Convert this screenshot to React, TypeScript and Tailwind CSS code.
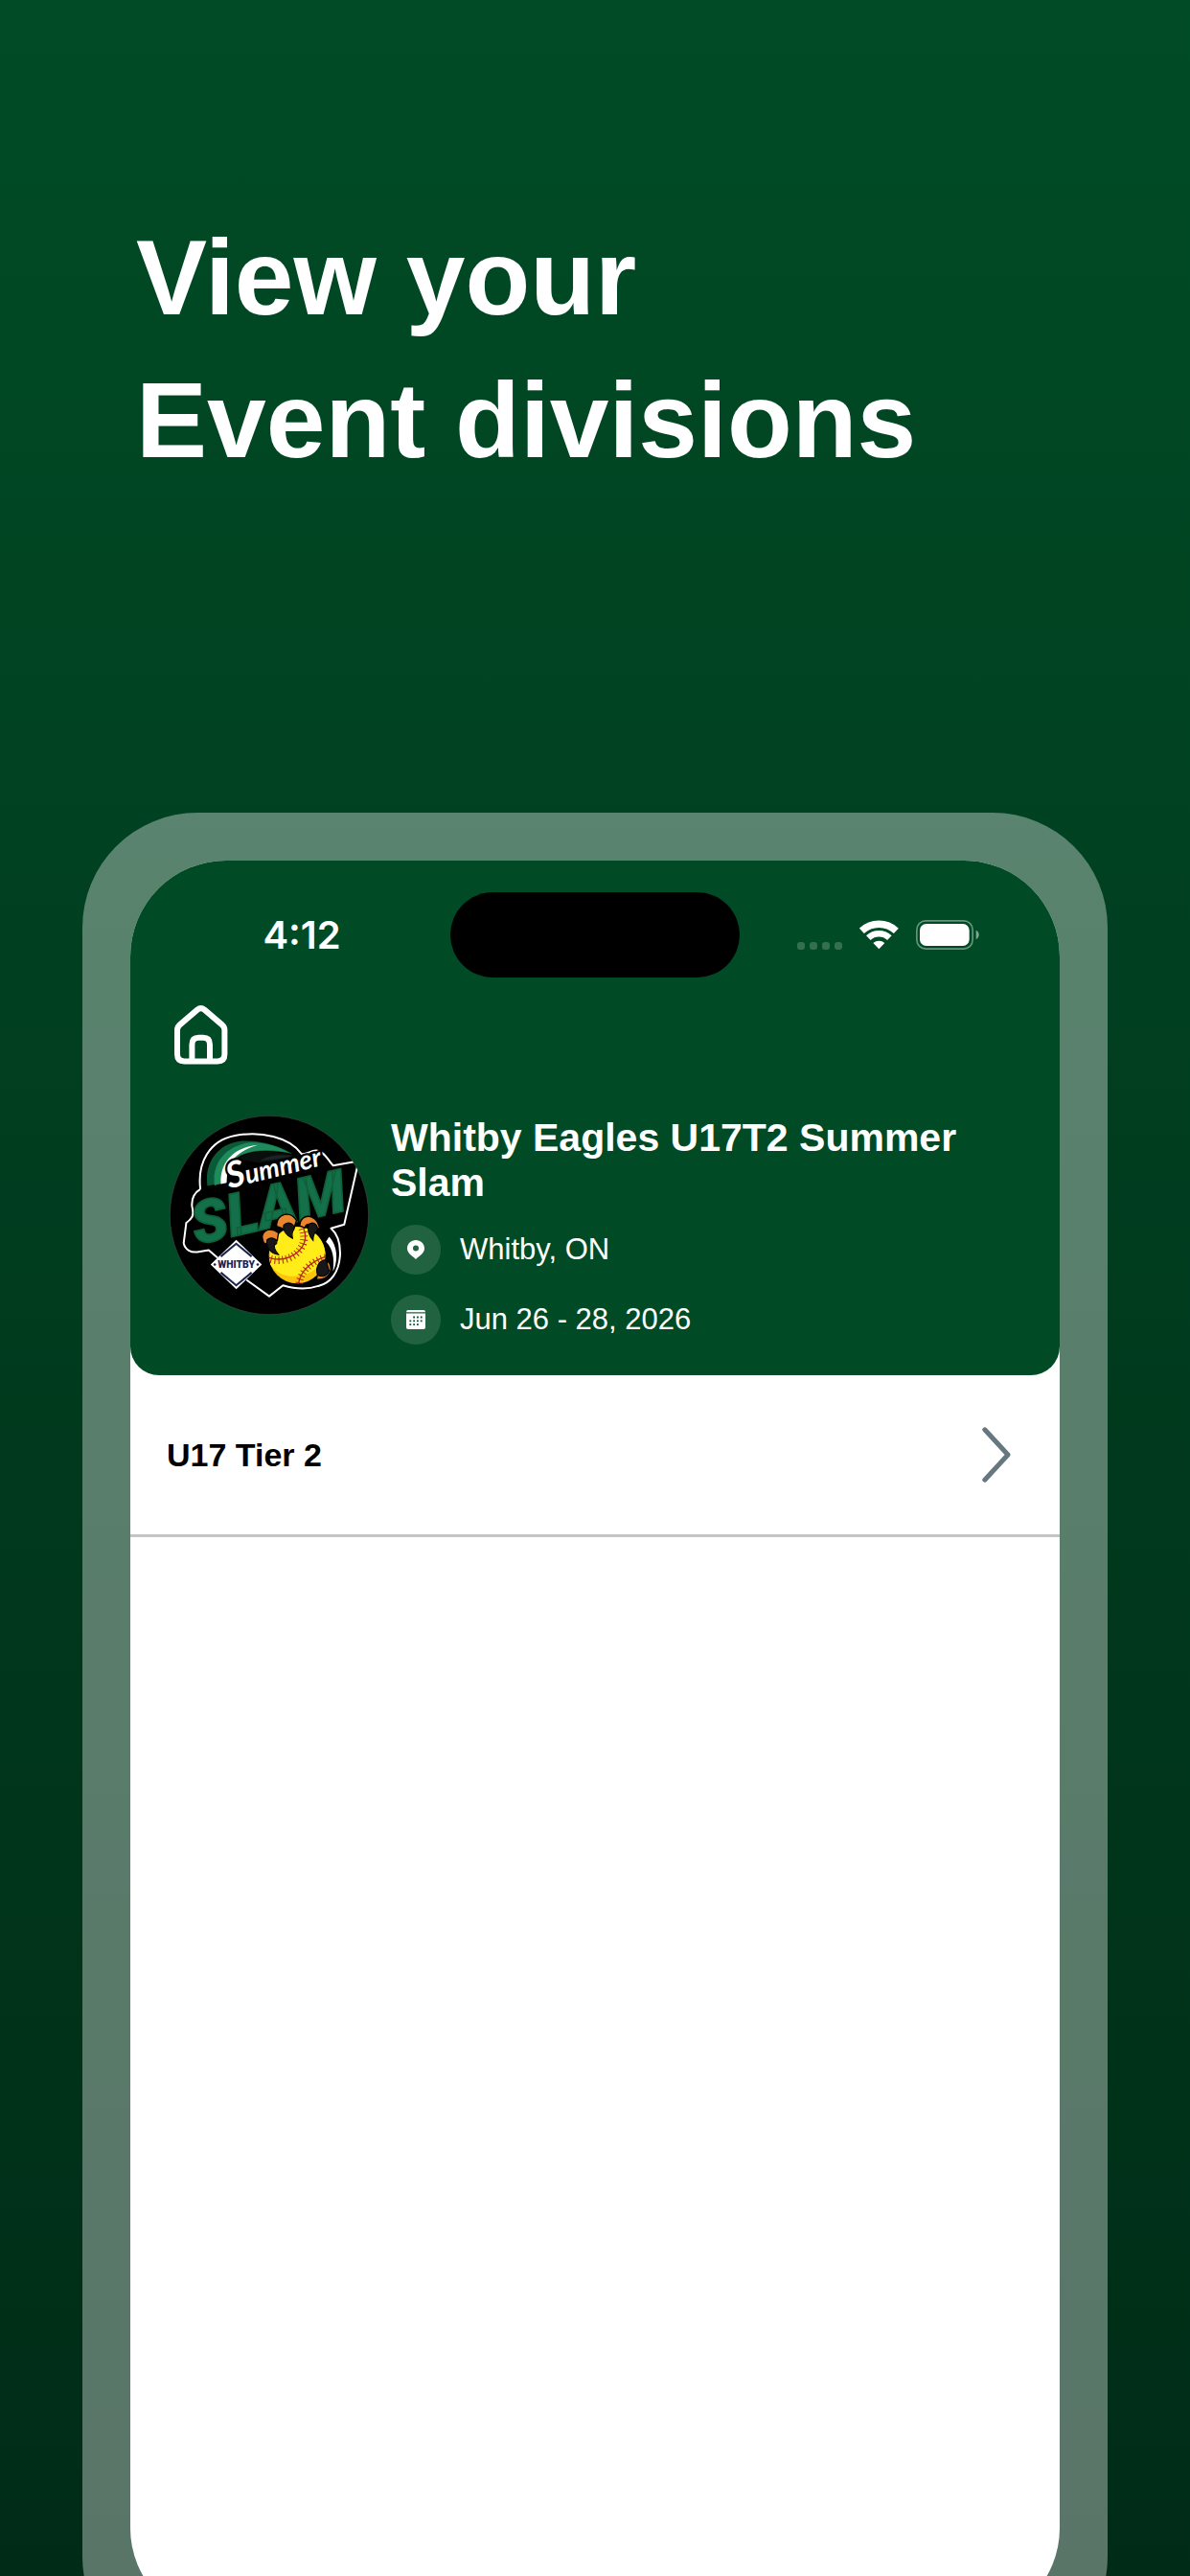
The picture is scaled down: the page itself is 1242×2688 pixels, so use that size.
import type { ReactNode } from "react";

const event = {
  name: "Whitby Eagles U17T2 Summer Slam",
  location: "Whitby, ON",
  dates: "Jun 26 - 28, 2026",
};

const divisions = [{ id: "u17-tier-2", label: "U17 Tier 2" }];

function HomeIcon() {
  return (
    <svg viewBox="0 0 56 62" className="h-[62px] w-14" fill="none" stroke="currentColor" strokeWidth="6" strokeLinejoin="round" aria-hidden="true">
      <path d="M24 4.6Q27.7 1.6 31.4 4.6L49.8 20.4Q52.4 22.6 52.4 26V51Q52.4 58.4 45 58.4H10.4Q3 58.4 3 51V26Q3 22.6 5.6 20.4Z" />
      <path d="M18.4 58V41Q18.4 33.8 25.4 33.8H30Q37 33.8 37 41V58" />
    </svg>
  );
}

function WifiIcon() {
  return (
    <svg viewBox="348 183 123 93" className="h-[31px] w-[41px]" fill="none" stroke="currentColor" aria-hidden="true">
      <path d="M355 217A79 79 0 0 1 463 217" strokeWidth="22" />
      <path d="M376 239A48 48 0 0 1 442 239" strokeWidth="20" />
      <path d="M391 255A27 27 0 0 1 427 255L409 274Z" fill="currentColor" stroke="none" />
    </svg>
  );
}

function BatteryIcon() {
  return (
    <svg viewBox="0 0 198 93" className="h-[31px] w-[66px]" fill="none" aria-hidden="true">
      <rect x="2.5" y="2.5" width="175" height="88" rx="28" stroke="white" strokeOpacity="0.4" strokeWidth="5" />
      <rect x="12" y="12" width="155" height="69" rx="20" fill="white" />
      <path d="M188 32Q197 36 197 46T188 61Z" fill="white" fillOpacity="0.5" />
    </svg>
  );
}

function PinIcon() {
  return (
    <svg viewBox="0 0 18 20" className="h-5 w-[18px]" aria-hidden="true">
      <path fillRule="evenodd" fill="currentColor" d="M9 0C4 0 0 3.8 0 8.6C0 13.6 4 15.5 9 20C14 15.5 18 13.6 18 8.6C18 3.8 14 0 9 0ZM9 5.6A3 3 0 1 1 9 11.6A3 3 0 1 1 9 5.6Z" />
    </svg>
  );
}

function CalendarIcon() {
  return (
    <svg viewBox="0 0 20 20" className="size-5" aria-hidden="true">
      <path d="M2 0H18Q20 0 20 2.2H0Q0 0 2 0Z" fill="currentColor" />
      <path d="M0 3.4H20V18Q20 20 18 20H2Q0 20 0 18Z" fill="currentColor" />
      <g fill="#0f5131">
        <path d="M7.2 6.6h1.8v1.8H7.2zM11 6.6h1.8v1.8H11zM14.8 6.6h1.8v1.8h-1.8z" />
        <path d="M3.4 10.4h1.8v1.8H3.4zM7.2 10.4h1.8v1.8H7.2zM11 10.4h1.8v1.8H11zM14.8 10.4h1.8v1.8h-1.8z" />
        <path d="M3.4 14.2h1.8V16H3.4zM7.2 14.2h1.8V16H7.2zM11 14.2h1.8V16H11z" />
      </g>
    </svg>
  );
}

function ChevronIcon() {
  return (
    <svg viewBox="0 0 30 58" className="h-[58px] w-[30px] text-[#66777f]" fill="none" stroke="currentColor" strokeWidth="5" strokeLinecap="round" strokeLinejoin="round" aria-hidden="true">
      <path d="M2.8 2.8L27 29L2.8 55.2" />
    </svg>
  );
}

function EventLogo() {
  return (
    <svg viewBox="36 42 622 622" className="size-[208px] shrink-0" role="img" aria-label="Summer Slam Whitby">
      <defs>
        <clipPath id="badge">
          <circle cx="347" cy="353" r="310" />
        </clipPath>
      </defs>
      <circle cx="347" cy="353" r="310" fill="#000" stroke="#3c4a42" strokeWidth="2" />
      <g clipPath="url(#badge)">
        {/* badge outline */}
        <path
          d="M132 272C122 190 160 120 240 105C320 90 410 108 448 162C468 164 478 148 498 152C520 156 528 178 546 198L626 184L581 382L540 394C560 412 570 440 568 480C564 530 540 566 500 574C470 584 430 584 390 572L347 606L276 555"
          fill="none"
          stroke="#fff"
          strokeWidth="6"
          strokeLinejoin="round"
        />
        <path d="M132 272C112 284 104 300 106 325C112 350 110 362 88 377L80 440C84 462 104 470 122 468L158 462L186 486" fill="none" stroke="#fff" strokeWidth="6" strokeLinejoin="round" />
        {/* breaking wave */}
        <path d="M154 262C144 190 184 132 256 122C320 116 382 138 420 162C350 148 280 148 240 178C222 196 214 226 212 250Z" fill="#0b5a37" />
        <path d="M176 260C168 190 210 142 276 128C328 122 376 140 408 158C342 144 276 148 236 180C218 200 210 226 206 252Z" fill="#1f8a5b" />
        <path d="M196 256C192 196 228 142 312 134C262 148 226 176 218 210Q214 232 214 252Z" fill="#fff" />
        <path d="M250 178C290 146 350 152 424 166C390 182 350 184 318 190Z" fill="#0a0f0e" />
        <path d="M318 184C350 162 390 164 420 168C390 176 350 180 318 184Z" fill="#1c2226" />
        <g transform="translate(120 446) rotate(-13)">
          <text fontFamily="Roboto, 'Liberation Sans', sans-serif" fontWeight="900" fontStyle="italic" fontSize="184" fill="#14704a" stroke="#0f6238" strokeWidth="5" strokeLinejoin="round">
            SLAM
          </text>
        </g>
        <g transform="translate(222 270) rotate(-14)">
          <text fontFamily="Lato, 'Liberation Sans', sans-serif" fontWeight="700" fontStyle="italic" fill="#fff" stroke="#000" strokeWidth="14" paintOrder="stroke">
            <tspan fontSize="112">S</tspan>
            <tspan fontSize="82">ummer</tspan>
          </text>
        </g>
        {/* claw and ball */}
        <path d="M534 420C562 450 562 500 546 528C550 490 548 460 524 436Z" fill="#fff" />
        <circle cx="434" cy="478" r="96" fill="#000" />
        <circle cx="434" cy="478" r="88" fill="#fdc40f" />
        <path d="M350 506C344 440 380 392 434 390C484 390 520 430 522 474C506 520 470 544 424 544C390 544 364 530 350 506Z" fill="#ffec19" />
        <path d="M346 486C390 500 440 480 456 440Q464 418 454 394" fill="none" stroke="#b2231d" strokeWidth="4" />
        <path d="M352 490C390 502 436 482 452 444Q460 420 450 394" fill="none" stroke="#b2231d" strokeWidth="24" strokeDasharray="3 9" />
        <path d="M438 568C444 530 472 500 524 482" fill="none" stroke="#b2231d" strokeWidth="4" />
        <path d="M440 566C446 530 474 500 522 484" fill="none" stroke="#b2231d" strokeWidth="22" strokeDasharray="3 9" />
        <g stroke="#000" strokeWidth="4">
          <path d="M330 440C314 402 346 388 376 408L372 432C354 422 346 426 344 444Z" fill="#e9852f" />
          <path d="M370 388C370 346 414 338 432 370L424 394C408 372 396 378 394 396Z" fill="#e9852f" />
          <path d="M442 386C444 346 494 346 504 392L490 404C480 376 464 376 458 392Z" fill="#e9852f" />
          <path d="M528 496C550 514 540 556 494 554L498 538C518 540 526 528 524 510Z" fill="#e9852f" />
        </g>
        <g fill="#17171a" stroke="#000" strokeWidth="3">
          <path d="M340 430C356 416 374 430 370 442C358 446 362 460 376 476C350 474 336 452 340 430Z" />
          <path d="M392 384C408 368 430 384 424 398C416 406 418 416 420 426C400 416 388 400 392 384Z" />
          <path d="M470 382C488 368 502 388 496 402C486 408 484 420 484 432C470 416 464 396 470 382Z" />
          <path d="M524 492C500 494 490 520 498 540C514 548 530 542 534 526Z" />
        </g>
        {/* plate */}
        <path d="M244 430L324 507L244 584L164 507Z" fill="#fff" />
        <path d="M196 482L244 442L292 482M196 532L244 572L292 532" fill="none" stroke="#1d2350" strokeWidth="6" />
        <circle cx="177" cy="507" r="4" fill="#1d2350" />
        <circle cx="311" cy="507" r="4" fill="#1d2350" />
        <text x="244" y="518" textAnchor="middle" fontFamily="Roboto, 'Liberation Sans', sans-serif" fontWeight="900" fontSize="31" fill="#1d2350">
          WHITBY
        </text>
      </g>
    </svg>
  );
}

function StatusBar() {
  return (
    <div className="grid grid-cols-[1fr_302px_1fr] items-center">
      <p className="pl-6 text-center font-[Inter,sans-serif] text-[40px] leading-none font-semibold">4:12</p>
      <div className="h-[89px] rounded-full bg-black" />
      <div className="flex items-end justify-center pr-6">
        <div className="mr-[18px] flex gap-[5px]">
          <span className="size-2 rounded-[3px] bg-white/20" />
          <span className="size-2 rounded-[3px] bg-white/20" />
          <span className="size-2 rounded-[3px] bg-white/20" />
          <span className="size-2 rounded-[3px] bg-white/20" />
        </div>
        <WifiIcon />
        <span className="w-[18px]" />
        <BatteryIcon />
      </div>
    </div>
  );
}

function EventDetail({ icon, children }: { icon: ReactNode; children: ReactNode }) {
  return (
    <li className="flex items-center gap-5">
      <span className="flex size-[52px] items-center justify-center rounded-full bg-white/13">{icon}</span>
      <span className="text-[31px] leading-9">{children}</span>
    </li>
  );
}

function EventHeader() {
  return (
    <header className="rounded-b-[30px] bg-[#004b25] pt-[33px] pb-8 text-white">
      <StatusBar />
      <div className="px-[41px]">
        <button type="button" aria-label="Home" className="mt-[29px] ml-[5px] block">
          <HomeIcon />
        </button>
        <div className="mt-[53px] flex items-start gap-[23px]">
          <EventLogo />
          <div className="flex-1">
            <h2 className="text-[41px] leading-[47px] font-bold">{event.name}</h2>
            <ul className="mt-5 space-y-[21px]">
              <EventDetail icon={<PinIcon />}>{event.location}</EventDetail>
              <EventDetail icon={<CalendarIcon />}>{event.dates}</EventDetail>
            </ul>
          </div>
        </div>
      </div>
    </header>
  );
}

export default function App() {
  return (
    <main className="flex h-screen flex-col overflow-hidden bg-linear-to-b from-[#004c26] to-[#002c17] px-[86px] font-['Liberation_Sans',Arial,sans-serif]">
      <h1 className="mt-[216px] ml-14 text-[111px] leading-[149px] font-bold text-white">
        View your
        <br />
        Event divisions
      </h1>
      <section className="mt-[334px] flex aspect-[1070/1940] shrink-0 flex-col rounded-[120px] bg-white/35 p-[50px]">
        <div className="flex-1 overflow-hidden rounded-[100px] bg-white">
          <EventHeader />
          <ul>
            {divisions.map((division) => (
              <li key={division.id} className="border-b-3 border-[#c4c4c4]">
                <a href={`#${division.id}`} className="flex items-center justify-between py-[54px] pr-[51px] pl-[38px] text-[34px] leading-10 font-bold text-black">
                  {division.label}
                  <ChevronIcon />
                </a>
              </li>
            ))}
          </ul>
        </div>
      </section>
    </main>
  );
}
